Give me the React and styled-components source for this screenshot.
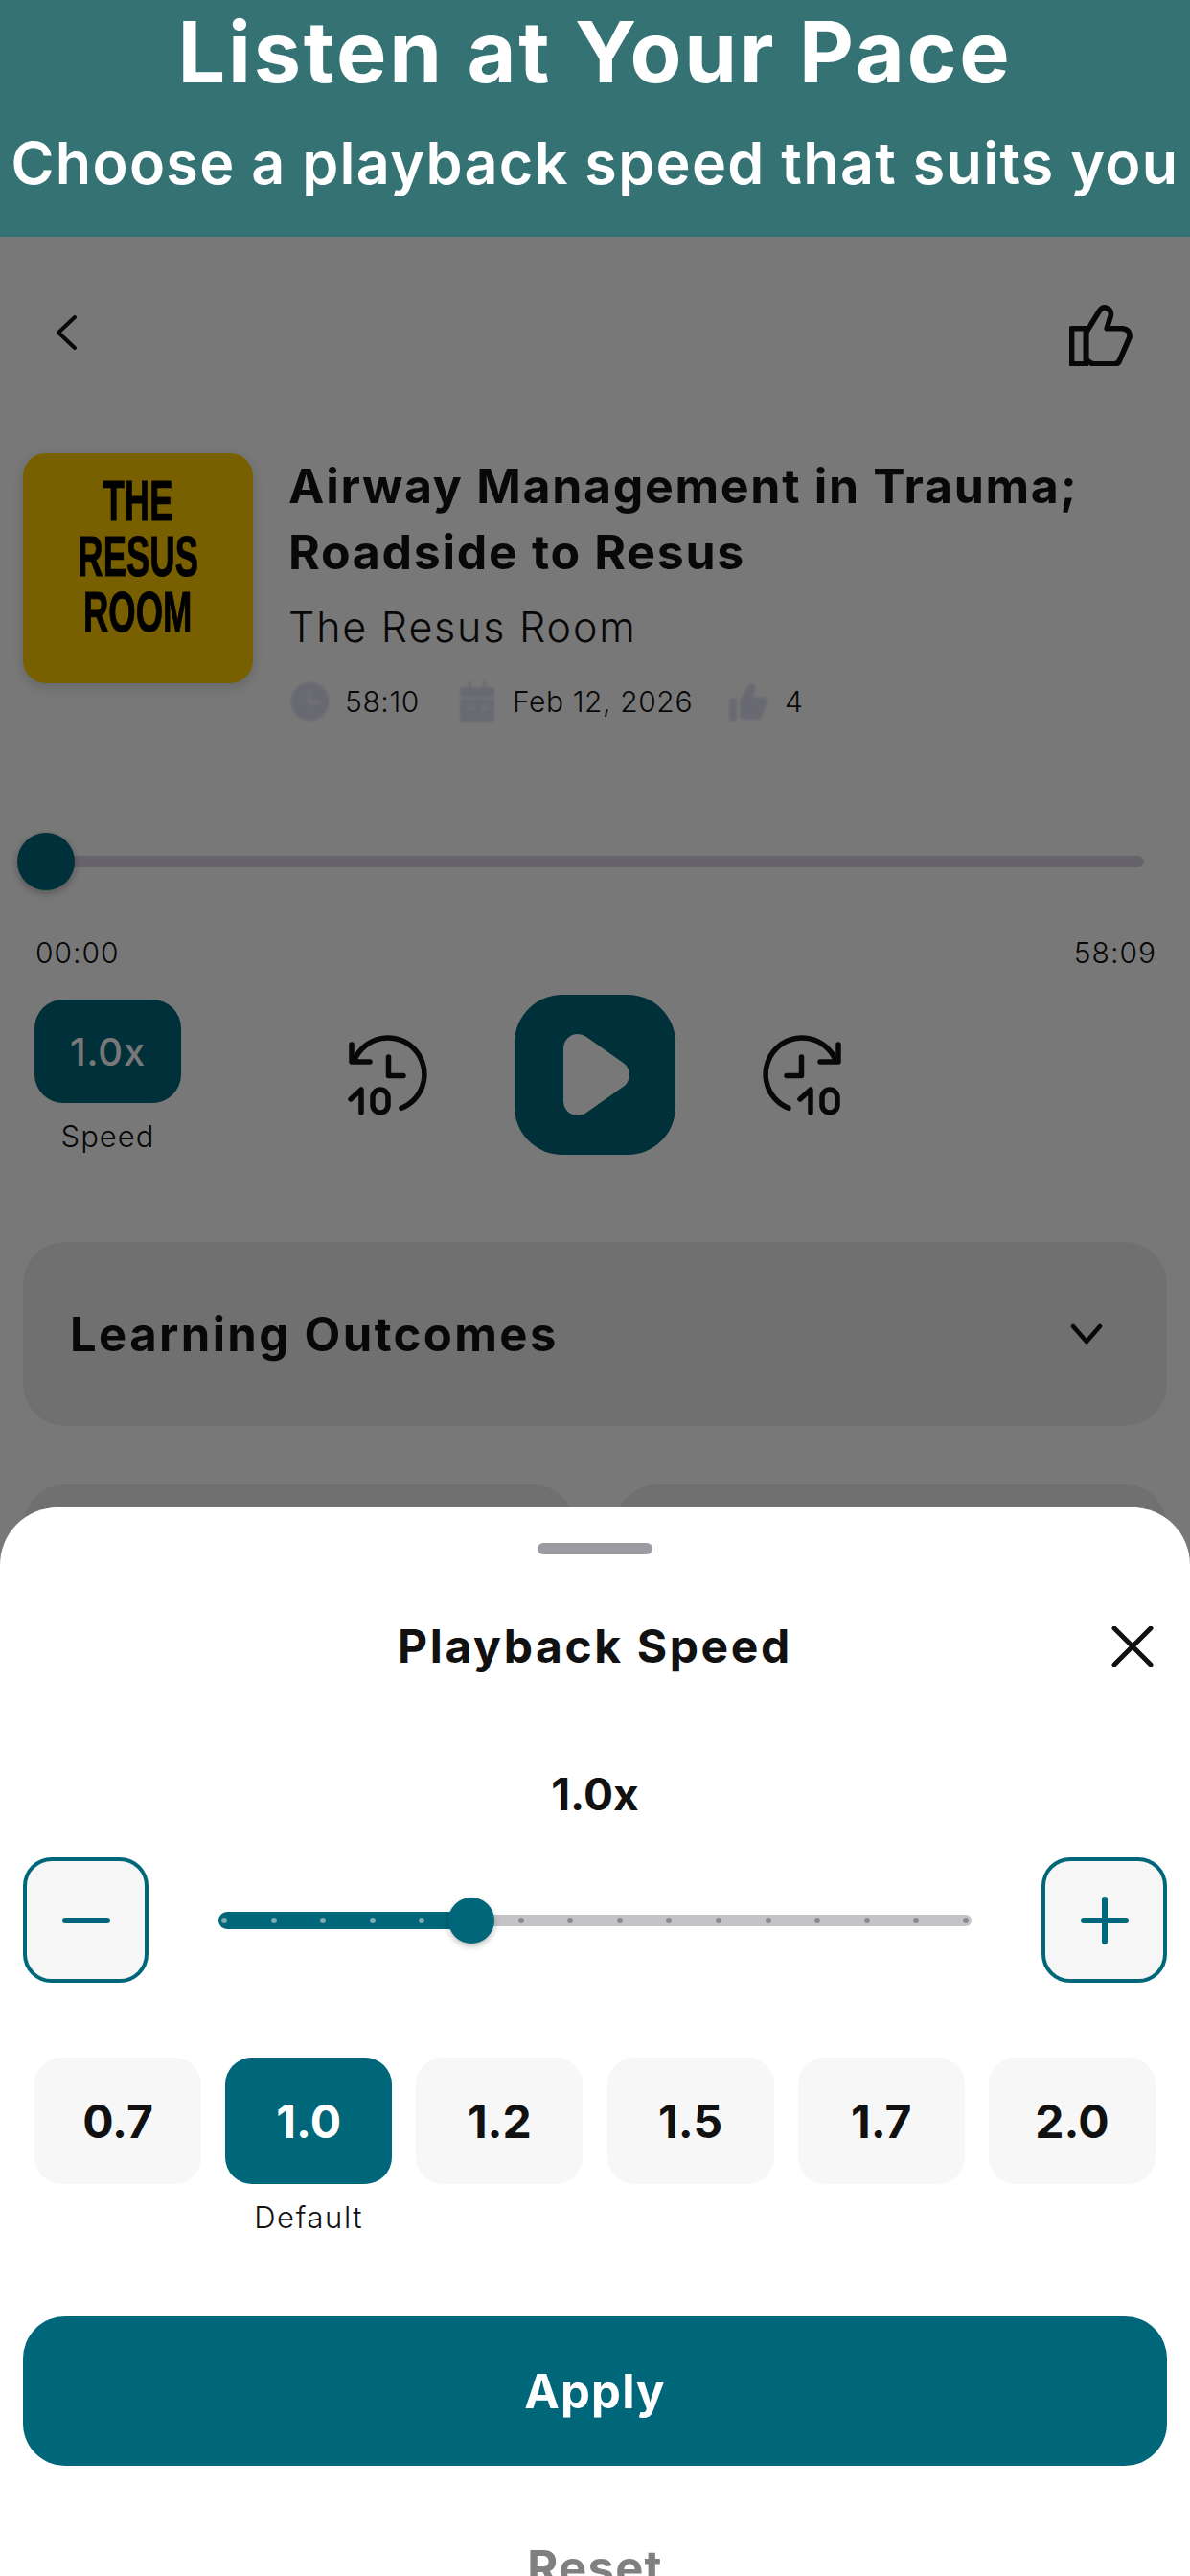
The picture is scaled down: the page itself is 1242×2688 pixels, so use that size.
import styled, { createGlobalStyle } from "styled-components";

const TEAL = "#00677a";
const FONT = `Inter, "Noto Sans", sans-serif`;

const GlobalStyle = createGlobalStyle`
  html, body {
    margin: 0;
    padding: 0;
    background: #fff;
  }
  * {
    box-sizing: border-box;
  }
`;

const Page = styled.div`
  position: relative;
  width: 1242px;
  height: 2688px;
  overflow: hidden;
  background: #fff;
  color: #111;
  font-family: ${FONT};
`;

const Banner = styled.header`
  position: relative;
  z-index: 2;
  height: 247px;
  background: #347274;
  color: #fff;
  text-align: center;
  overflow: hidden;
`;

const BannerTitle = styled.h1`
  margin: 0;
  padding-top: 4px;
  font-size: 88px;
  line-height: 100px;
  font-weight: 700;
  letter-spacing: 2.8px;
  white-space: nowrap;
`;

const BannerSub = styled.p`
  margin: 28px 0 0;
  font-size: 61px;
  line-height: 76px;
  font-weight: 600;
  letter-spacing: 1.3px;
  white-space: nowrap;
`;

const Screen = styled.main`
  display: flex;
  flex-direction: column;
`;

const TopBar = styled.div`
  display: flex;
  align-items: center;
  justify-content: space-between;
  height: 62px;
  margin-top: 72px;
  padding: 0 60px 0 57px;
`;

const BackIcon = styled.svg`
  width: 24px;
  height: 36px;
  margin-top: -6px;
`;

const LikeIcon = styled.svg`
  width: 66px;
  height: 64px;
`;

const Episode = styled.section`
  display: flex;
  align-items: flex-start;
  gap: 37px;
  margin-top: 92px;
  padding-left: 24px;
`;

const Cover = styled.div`
  flex: none;
  display: flex;
  flex-direction: column;
  align-items: center;
  width: 240px;
  height: 240px;
  padding-top: 20px;
  border-radius: 24px;
  background: #ffcc00;
  box-shadow: 0 4px 14px rgba(0, 0, 0, 0.16);
  color: #000;
`;

const CoverLine = styled.span`
  display: block;
  height: 58px;
  font-family: "Liberation Sans", sans-serif;
  font-size: 57px;
  line-height: 58px;
  font-weight: 700;
  white-space: nowrap;
  -webkit-text-stroke: 1px #000;
  transform: scale(0.64, 1.05);
`;

const Info = styled.div`
  display: flex;
  flex-direction: column;
`;

const EpisodeTitle = styled.h2`
  margin: 0;
  font-size: 50px;
  line-height: 69px;
  font-weight: 700;
  letter-spacing: 1.7px;
`;

const Artist = styled.p`
  margin: 13px 0 0;
  font-size: 43px;
  line-height: 60px;
  font-weight: 300;
  letter-spacing: 1.8px;
`;

const Meta = styled.div`
  display: flex;
  align-items: center;
  height: 44px;
  margin-top: 26px;
  padding-left: 2px;
`;

const MetaIcon = styled.svg`
  flex: none;
  width: ${(p) => p.$w}px;
  height: 42px;
  margin-left: ${(p) => p.$gap || 0}px;
  margin-right: ${(p) => p.$after}px;
  filter: blur(0.8px);
`;

const MetaText = styled.span`
  font-size: 30px;
  line-height: 44px;
  font-weight: 300;
  letter-spacing: 0.6px;
  white-space: nowrap;
`;

const Seek = styled.div`
  position: relative;
  height: 60px;
  margin: 115px 48px 0;
  display: flex;
  align-items: center;
`;

const SeekTrack = styled.div`
  width: 100%;
  height: 12px;
  border-radius: 6px;
  background: #d9d3e4;
`;

const SeekThumb = styled.div`
  position: absolute;
  left: -30px;
  top: 0;
  width: 60px;
  height: 60px;
  border-radius: 50%;
  background: ${TEAL};
  box-shadow: 0 3px 8px rgba(0, 0, 0, 0.3);
`;

const Times = styled.div`
  display: flex;
  justify-content: space-between;
  margin-top: 45px;
  padding: 0 35px 0 37px;
  font-size: 30px;
  line-height: 40px;
  font-weight: 300;
  letter-spacing: 1px;
`;

const Controls = styled.div`
  display: grid;
  grid-template-columns: 1fr auto 1fr;
  margin-top: 23px;
`;

const SpeedColumn = styled.div`
  display: flex;
  flex-direction: column;
  align-items: center;
  width: 153px;
  margin: 6px 0 0 36px;
`;

const SpeedButton = styled.div`
  display: flex;
  align-items: center;
  justify-content: center;
  width: 153px;
  height: 108px;
  border-radius: 30px;
  background: ${TEAL};
  color: #fff;
  font-size: 40px;
  font-weight: 500;
  letter-spacing: 0.8px;
`;

const SpeedLabel = styled.span`
  margin-top: 15px;
  font-size: 31px;
  line-height: 40px;
  font-weight: 300;
  letter-spacing: 1px;
`;

const Transport = styled.div`
  display: flex;
  align-items: center;
  gap: 91px;
`;

const SkipIcon = styled.svg`
  width: 83px;
  height: 84px;
  margin-top: 1px;
`;

const PlayButton = styled.div`
  display: flex;
  align-items: center;
  justify-content: center;
  width: 168px;
  height: 167px;
  padding-left: 3px;
  border-radius: 50px;
  background: ${TEAL};
`;

const Outcomes = styled.div`
  display: flex;
  align-items: center;
  justify-content: space-between;
  height: 192px;
  margin: 90px 24px 0;
  padding: 0 67px 0 49px;
  border-radius: 44px;
  background: #eeeeee;
  font-size: 49px;
  font-weight: 700;
  letter-spacing: 2.4px;
`;

const StatCards = styled.div`
  display: grid;
  grid-template-columns: 1fr 1fr;
  gap: 42px;
  margin: 61px 24px 0;
`;

const StatCard = styled.div`
  height: 200px;
  border-radius: 44px;
  background: #eeeeee;
`;

const Scrim = styled.div`
  position: absolute;
  inset: 247px 0 0;
  z-index: 1;
  background: rgba(0, 0, 0, 0.53);
`;

const Sheet = styled.section`
  position: absolute;
  top: 1573px;
  left: 0;
  right: 0;
  z-index: 3;
  height: 1160px;
  border-radius: 60px 60px 0 0;
  background: #fff;
  display: flex;
  flex-direction: column;
`;

const Handle = styled.div`
  align-self: center;
  width: 120px;
  height: 12px;
  margin-top: 37px;
  border-radius: 6px;
  background: #9b9ba1;
`;

const SheetHeader = styled.div`
  display: grid;
  grid-template-columns: 1fr auto 1fr;
  align-items: center;
  height: 60px;
  margin-top: 66px;
  padding: 0 38px;
`;

const SheetTitle = styled.h3`
  grid-column: 2;
  margin: 0;
  font-size: 48px;
  line-height: 60px;
  font-weight: 700;
  letter-spacing: 2.6px;
`;

const CloseButton = styled.svg`
  grid-column: 3;
  justify-self: end;
  width: 44px;
  height: 42px;
`;

const SpeedValue = styled.div`
  margin-top: 94px;
  text-align: center;
  font-size: 46px;
  line-height: 60px;
  font-weight: 700;
`;

const Stepper = styled.div`
  display: flex;
  align-items: center;
  justify-content: space-between;
  margin-top: 36px;
  padding: 0 24px;
`;

const StepButton = styled.div`
  display: flex;
  align-items: center;
  justify-content: center;
  width: 131px;
  height: 131px;
  border: 4px solid ${TEAL};
  border-radius: 30px;
  background: #f6f6f7;
`;

const SpeedSlider = styled.div`
  position: relative;
  display: flex;
  align-items: center;
  width: 786px;
  height: 48px;
`;

const SliderTrack = styled.div`
  width: 100%;
  height: 12px;
  border-radius: 6px;
  background: #c4c4c8;
`;

const SliderFill = styled.div`
  position: absolute;
  left: 0;
  top: 15px;
  height: 18px;
  border-radius: 9px;
  background: ${TEAL};
`;

const Ticks = styled.div`
  position: absolute;
  inset: 21px 3px;
  display: flex;
  justify-content: space-between;
`;

const Tick = styled.i`
  width: 6px;
  height: 6px;
  border-radius: 50%;
  background: ${(p) => (p.$on ? "#7fa9b4" : "#8b8b91")};
`;

const SliderThumb = styled.div`
  position: absolute;
  top: 0;
  width: 48px;
  height: 48px;
  border-radius: 50%;
  background: ${TEAL};
  box-shadow: 0 3px 6px rgba(0, 0, 0, 0.25);
`;

const Presets = styled.div`
  display: grid;
  grid-template-columns: repeat(6, 174px);
  justify-content: space-between;
  margin-top: 78px;
  padding: 0 36px;
`;

const Preset = styled.div`
  display: flex;
  flex-direction: column;
  align-items: center;
`;

const PresetChip = styled.div`
  display: flex;
  align-items: center;
  justify-content: center;
  width: 100%;
  height: 132px;
  border-radius: 28px;
  background: ${(p) => (p.$active ? TEAL : "#f7f7f7")};
  color: ${(p) => (p.$active ? "#fff" : "#111")};
  font-size: 48px;
  font-weight: 700;
`;

const PresetNote = styled.span`
  margin-top: 15px;
  font-size: 31px;
  line-height: 40px;
  font-weight: 300;
  letter-spacing: 1.6px;
`;

const ApplyButton = styled.div`
  display: flex;
  align-items: center;
  justify-content: center;
  height: 156px;
  margin: 83px 24px 0;
  border-radius: 44px;
  background: ${TEAL};
  color: #fff;
  font-size: 49px;
  font-weight: 700;
  letter-spacing: 1.2px;
`;

const ResetButton = styled.div`
  margin-top: 77px;
  text-align: center;
  color: #808080;
  font-size: 49px;
  line-height: 60px;
  font-weight: 700;
  letter-spacing: 1.2px;
`;

const THUMB_HAND =
  "M17 28 L30 7 Q33 2 37 3 Q43 5 42 11 L38 24 H54 Q62 25 61 33 L51 56 Q50 60 45 60 H25 Q22 60 17 55 Z";

const SPEEDS = ["0.7", "1.0", "1.2", "1.5", "1.7", "2.0"];

// sixteen stops along the speed slider, the first five sit under the fill
const TICK_COUNT = 16;

const SkipGlyph = ({ forward }) => (
  <SkipIcon
    viewBox="0 0 83 84"
    fill="none"
    stroke="#111"
    strokeWidth="5.5"
    strokeLinecap="round"
    strokeLinejoin="round"
  >
    <g transform={forward ? "translate(83 0) scale(-1 1)" : undefined}>
      <path d="M7 26 A38 38 0 1 1 56 76.3" />
      <path d="M4 10 V28 H23" />
      <path d="M42.5 23 V42.5 H58" />
    </g>
    <g transform={forward ? "translate(36 0)" : undefined}>
      <path d="M3 67 L14 57 V81" />
      <rect x="26" y="57" width="16" height="24" rx="8" />
    </g>
  </SkipIcon>
);

const App = () => {
  return (
    <Page>
      <GlobalStyle />
      <Banner>
        <BannerTitle>Listen at Your Pace</BannerTitle>
        <BannerSub>Choose a playback speed that suits you</BannerSub>
      </Banner>

      <Screen>
        <TopBar>
          <BackIcon viewBox="0 0 24 36" fill="none" stroke="#111" strokeWidth="4" strokeLinecap="round" strokeLinejoin="round">
            <path d="M21 2 L4 18 L21 34" />
          </BackIcon>
          <LikeIcon viewBox="0 0 64 62" fill="none" stroke="#111" strokeWidth="5.5" strokeLinejoin="round">
            <rect x="2.5" y="24" width="14.5" height="36" />
            <path d={THUMB_HAND} />
          </LikeIcon>
        </TopBar>

        <Episode>
          <Cover>
            <CoverLine>THE</CoverLine>
            <CoverLine>RESUS</CoverLine>
            <CoverLine>ROOM</CoverLine>
          </Cover>
          <Info>
            <EpisodeTitle>
              Airway Management in Trauma;
              <br />
              Roadside to Resus
            </EpisodeTitle>
            <Artist>The Resus Room</Artist>
            <Meta>
              <MetaIcon $w={41} $after={16} viewBox="0 0 41 42">
                <circle cx="20.5" cy="21" r="20" fill="#dfe0f3" />
                <path d="M20 9 V22 H30" fill="none" stroke="#fff" strokeOpacity="0.55" strokeWidth="3" />
              </MetaIcon>
              <MetaText>58:10</MetaText>
              <MetaIcon $w={36} $gap={42} $after={19} viewBox="0 0 36 42">
                <path d="M3 6 H33 Q36 6 36 9 V39 Q36 42 33 42 H3 Q0 42 0 39 V9 Q0 6 3 6 Z M9 0 H12 V8 H9 Z M24 0 H27 V8 H24 Z" fill="#dfe0f3" />
                <path d="M0 17 H36 M6 28 H16 M22 28 H30" stroke="#fff" strokeOpacity="0.5" strokeWidth="3" />
              </MetaIcon>
              <MetaText>Feb 12, 2026</MetaText>
              <MetaIcon $w={42} $gap={38} $after={16} viewBox="0 0 64 62">
                <rect x="0" y="26" width="12" height="36" fill="#dfe0f3" />
                <path d={THUMB_HAND} fill="#dfe0f3" />
              </MetaIcon>
              <MetaText>4</MetaText>
            </Meta>
          </Info>
        </Episode>

        <Seek>
          <SeekTrack />
          <SeekThumb />
        </Seek>
        <Times>
          <span>00:00</span>
          <span>58:09</span>
        </Times>

        <Controls>
          <SpeedColumn>
            <SpeedButton>1.0x</SpeedButton>
            <SpeedLabel>Speed</SpeedLabel>
          </SpeedColumn>
          <Transport>
            <SkipGlyph />
            <PlayButton>
              <svg width="69" height="85" viewBox="0 0 69 85" fill="#fff" stroke="#fff" strokeWidth="30" strokeLinejoin="round">
                <path d="M15 15 L54 42.5 L15 70 Z" />
              </svg>
            </PlayButton>
            <SkipGlyph forward />
          </Transport>
        </Controls>

        <Outcomes>
          Learning Outcomes
          <svg width="34" height="22" viewBox="0 0 34 22" fill="none" stroke="#111" strokeWidth="4.5" strokeLinecap="round" strokeLinejoin="round">
            <path d="M3 3 L17 19 L31 3" />
          </svg>
        </Outcomes>

        <StatCards>
          <StatCard />
          <StatCard />
        </StatCards>
      </Screen>

      <Scrim />

      <Sheet>
        <Handle />
        <SheetHeader>
          <SheetTitle>Playback Speed</SheetTitle>
          <CloseButton viewBox="0 0 44 42" fill="none" stroke="#111" strokeWidth="5" strokeLinecap="round">
            <path d="M3 2 L41 40 M41 2 L3 40" />
          </CloseButton>
        </SheetHeader>

        <SpeedValue>1.0x</SpeedValue>

        <Stepper>
          <StepButton>
            <svg width="50" height="8" viewBox="0 0 50 8" fill="none" stroke={TEAL} strokeWidth="6" strokeLinecap="round">
              <path d="M3 4 H47" />
            </svg>
          </StepButton>
          <SpeedSlider>
            <SliderTrack />
            <SliderFill style={{ width: 264 }} />
            <Ticks>
              {Array.from({ length: TICK_COUNT }, (_, i) => (
                <Tick key={i} $on={i < 6} />
              ))}
            </Ticks>
            <SliderThumb style={{ left: 240 }} />
          </SpeedSlider>
          <StepButton>
            <svg width="50" height="50" viewBox="0 0 50 50" fill="none" stroke={TEAL} strokeWidth="6" strokeLinecap="round">
              <path d="M3 25 H47 M25 3 V47" />
            </svg>
          </StepButton>
        </Stepper>

        <Presets>
          {SPEEDS.map((speed) => (
            <Preset key={speed}>
              <PresetChip $active={speed === "1.0"}>{speed}</PresetChip>
              {speed === "1.0" && <PresetNote>Default</PresetNote>}
            </Preset>
          ))}
        </Presets>

        <ApplyButton>Apply</ApplyButton>
        <ResetButton>Reset</ResetButton>
      </Sheet>
    </Page>
  );
};

export default App;
